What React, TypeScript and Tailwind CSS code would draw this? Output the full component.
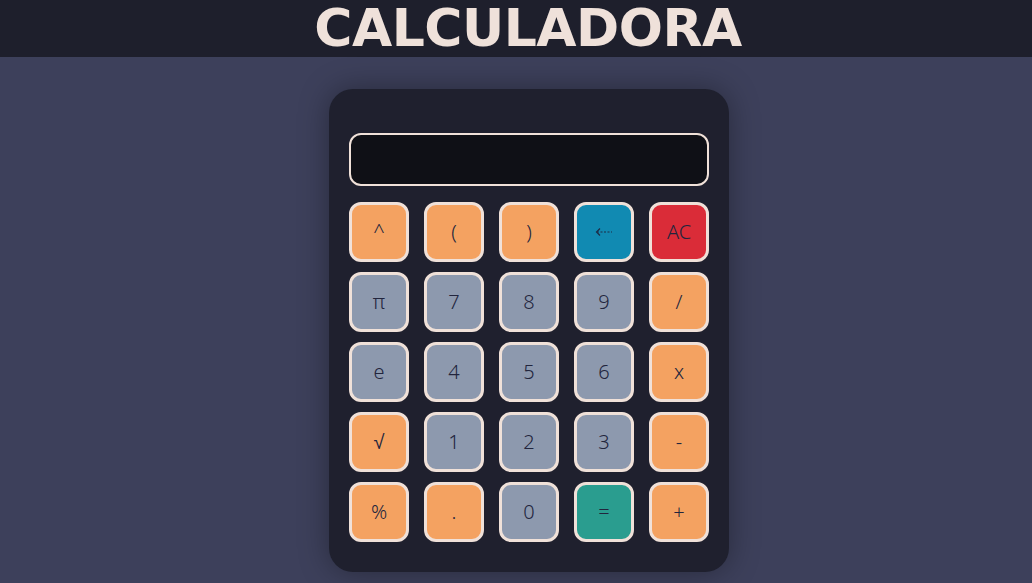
import React from 'react';

type Key = { label: string; color: string };

const ORANGE = 'bg-[#f4a261]';
const GRAY = 'bg-[#8d99ae]';

const keys: Key[] = [
  { label: '^', color: ORANGE },
  { label: '(', color: ORANGE },
  { label: ')', color: ORANGE },
  { label: '⇠', color: 'bg-[#118ab2]' },
  { label: 'AC', color: 'bg-[#da2c38]' },
  { label: 'π', color: GRAY },
  { label: '7', color: GRAY },
  { label: '8', color: GRAY },
  { label: '9', color: GRAY },
  { label: '/', color: ORANGE },
  { label: 'e', color: GRAY },
  { label: '4', color: GRAY },
  { label: '5', color: GRAY },
  { label: '6', color: GRAY },
  { label: 'x', color: ORANGE },
  { label: '√', color: ORANGE },
  { label: '1', color: GRAY },
  { label: '2', color: GRAY },
  { label: '3', color: GRAY },
  { label: '-', color: ORANGE },
  { label: '%', color: ORANGE },
  { label: '.', color: ORANGE },
  { label: '0', color: GRAY },
  { label: '=', color: 'bg-[#2a9d8f]' },
  { label: '+', color: ORANGE },
];

const App: React.FC = () => {
  return (
    <div className="min-h-screen bg-[#3d405b] font-['Noto_Sans',sans-serif]">
      {/* Header */}
      <header className="h-[57px] bg-[#1e1f2c] flex items-center justify-center pl-[24px]">
        <h1 className="text-[52px] leading-[57px] font-bold text-[#efe1da] font-['DejaVu_Sans',sans-serif] tracking-[-0.5px]">
          CALCULADORA
        </h1>
      </header>

      {/* Calculator */}
      <div className="flex justify-center pt-8 pl-[26px]">
        <div className="w-[400px] bg-[#1f202e] rounded-[24px] px-5 pt-11 pb-[30px] shadow-[0_0_30px_rgba(0,0,0,0.35)]">
          <div className="h-[53px] bg-[#0f1016] border-2 border-[#f0e1d9] rounded-[12px]" />
          <div className="grid grid-cols-5 gap-x-[15px] gap-y-[10px] mt-4">
            {keys.map((k, i) => (
              <button
                key={i}
                className={`h-[60px] w-[60px] ${k.color} border-[3px] border-[#f0e1d9] rounded-[12px] flex items-center justify-center text-[20px] font-light text-[#22253d]`}
              >
                {k.label === '⇠' ? (
                  <svg width="18" height="10" viewBox="0 0 18 10" fill="none" stroke="#1e2a44" strokeWidth="1.2">
                    <path d="M5 1.5 L1.5 5 L5 8.5" />
                    <path d="M2 5 H17" strokeDasharray="2 1.5" />
                  </svg>
                ) : (
                  k.label
                )}
              </button>
            ))}
          </div>
        </div>
      </div>
    </div>
  );
};

export default App;
